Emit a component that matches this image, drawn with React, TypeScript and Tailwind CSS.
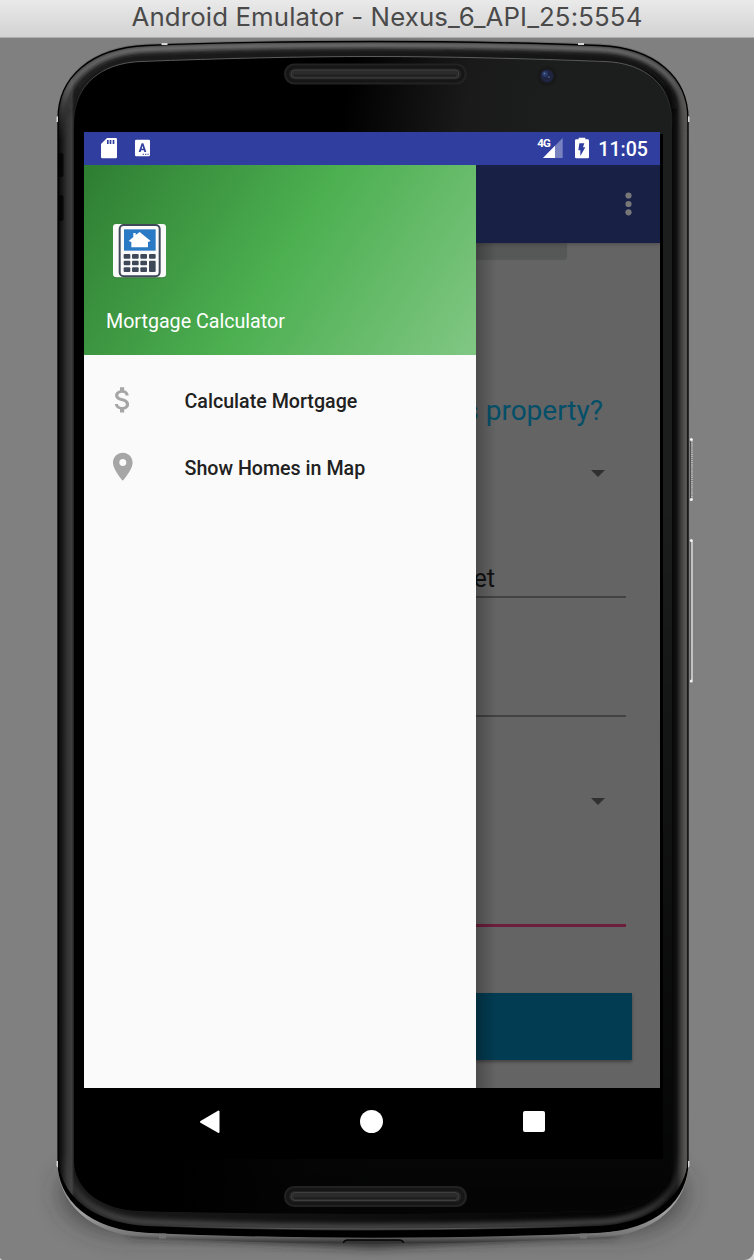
import type { ReactNode } from "react";
import { MdAttachMoney, MdPlace } from "react-icons/md";

const OUTER =
  "M58 119 C58 77 91 48 146 45.5 C220 42.5 300 41.5 373 41.5 C446 41.5 526 42.5 600 45.5 C655 48 688 77 688 119 L688 1160 C688 1201 655 1229 600 1232 C526 1235.500 446 1237 373 1237 C300 1237 220 1235.500 146 1232 C91 1229 58 1201 58 1160 Z";
const RIM =
  "M57 119 C57 76 90 46 146 43.5 C220 41 300 39.500 373 39.500 C446 39.500 526 41 600 43.5 C656 46 689 76 689 119 L689 1160 C689 1204 655 1235 600 1237.5 C526 1241.500 446 1243.500 373 1243.500 C300 1243.500 220 1241.500 146 1237.5 C91 1235 57 1204 57 1160 Z";
const GLASS =
  "M74 122 C74 85 101 63 141 61.5 C220 58.5 300 56.5 373 56.5 C446 56.5 526 58.5 605 61.5 C645 63 672 85 672 122 L672 1160 C672 1189 645 1210 605 1211 C526 1213 446 1214 373 1214 C300 1214 220 1213 141 1211 C101 1210 74 1189 74 1160 Z";

function Speaker({ y }: { y: number }) {
  return (
    <g>
      <rect x="284" y={y} width="183" height="21" rx="10" fill="#222222" />
      <rect x="287.500" y={y + 3.5} width="175.500" height="14" rx="7" fill="none" stroke="#161616" strokeWidth="3" />
      <rect x="291" y={y + 6.5} width="168" height="8" rx="4" fill="#2b2b2b" stroke="#3e3e3e" strokeWidth="1" />
      <rect x="294" y={y + 11} width="162" height="2" fill="#202020" />
    </g>
  );
}

function DeviceFrame() {
  return (
    <svg className="absolute inset-0" width="754" height="1222" viewBox="0 38 754 1222" aria-hidden="true">
      <defs>
        <linearGradient id="side" x1="58" x2="688" y1="0" y2="0" gradientUnits="userSpaceOnUse">
          <stop offset="0" stopColor="#060606" />
          <stop offset="0.006" stopColor="#161616" />
          <stop offset="0.015" stopColor="#343434" />
          <stop offset="0.022" stopColor="#3e3e3e" />
          <stop offset="0.0255" stopColor="#1a1a1a" />
          <stop offset="0.972" stopColor="#020202" />
          <stop offset="0.982" stopColor="#111111" />
          <stop offset="0.99" stopColor="#43413f" />
          <stop offset="0.996" stopColor="#5a5856" />
          <stop offset="1" stopColor="#4a4a4a" />
        </linearGradient>
        <linearGradient id="glass" x1="360" x2="560" y1="0" y2="30" gradientUnits="userSpaceOnUse">
          <stop offset="0" stopColor="#000" />
          <stop offset="0.6" stopColor="#1a1a1a" />
          <stop offset="1" stopColor="#1c1d1d" />
        </linearGradient>
        <linearGradient id="fade" x1="0" x2="0" y1="500" y2="1190" gradientUnits="userSpaceOnUse">
          <stop offset="0" stopColor="#000" stopOpacity="0" />
          <stop offset="1" stopColor="#000" stopOpacity="0.85" />
        </linearGradient>
        <linearGradient id="edge" x1="0" x2="0" y1="56" y2="130" gradientUnits="userSpaceOnUse">
          <stop offset="0" stopColor="#686868" />
          <stop offset="1" stopColor="#606060" stopOpacity="0" />
        </linearGradient>
        <linearGradient id="topLight" x1="0" x2="0" y1="46" y2="140" gradientUnits="userSpaceOnUse">
          <stop offset="0" stopColor="#787878" />
          <stop offset="0.4" stopColor="#666666" />
          <stop offset="1" stopColor="#444444" stopOpacity="0" />
        </linearGradient>
        <linearGradient id="topDark" x1="0" x2="0" y1="60" y2="120" gradientUnits="userSpaceOnUse">
          <stop offset="0" stopColor="#1c1c1c" />
          <stop offset="1" stopColor="#1c1c1c" stopOpacity="0" />
        </linearGradient>
        <linearGradient id="bottomLight" x1="0" x2="0" y1="1150" y2="1228" gradientUnits="userSpaceOnUse">
          <stop offset="0" stopColor="#4a4a4a" stopOpacity="0" />
          <stop offset="1" stopColor="#4c4c4c" />
        </linearGradient>
        <linearGradient id="seam" x1="146" x2="600" y1="0" y2="0" gradientUnits="userSpaceOnUse">
          <stop offset="0" stopColor="#5a5a5a" stopOpacity="0" />
          <stop offset="0.3" stopColor="#5a5a5a" />
          <stop offset="0.7" stopColor="#5a5a5a" />
          <stop offset="1" stopColor="#5a5a5a" stopOpacity="0" />
        </linearGradient>
        <linearGradient id="rim" x1="0" x2="0" y1="40" y2="1243" gradientUnits="userSpaceOnUse">
          <stop offset="0" stopColor="#6e6e6e" />
          <stop offset="0.05" stopColor="#777777" />
          <stop offset="0.94" stopColor="#8d8d8d" />
          <stop offset="0.975" stopColor="#a0a0a0" />
          <stop offset="0.993" stopColor="#777777" />
          <stop offset="1" stopColor="#333333" />
        </linearGradient>
        <filter id="soft" x="-20%" y="-20%" width="140%" height="140%">
          <feGaussianBlur stdDeviation="2.600" />
        </filter>
        <filter id="shadow" x="-30%" y="-80%" width="160%" height="260%">
          <feGaussianBlur stdDeviation="14" />
        </filter>
        <filter id="tight" x="-20%" y="-200%" width="140%" height="500%">
          <feGaussianBlur stdDeviation="5" />
        </filter>
        <clipPath id="body">
          <path d={OUTER} />
        </clipPath>
      </defs>
      <rect x="0" y="38" width="754" height="1222" fill="#808080" />
      <path d="M70 1175 H676 Q700 1215 630 1230 H116 Q46 1215 70 1175 Z" fill="#303030" opacity="0.85" filter="url(#shadow)" />
      <path d="M130 1230 L373 1243 L616 1230 Z" fill="#111" stroke="#222" strokeWidth="10" opacity="0.85" filter="url(#tight)" />
      <path d={RIM} fill="url(#rim)" />
      <path d={OUTER} fill="url(#side)" />
      <g clipPath="url(#body)">
        <path d="M61 150 L61 119 C61 80 94 52 146 49.5 C220 46.5 300 45.500 373 45.500 C446 45.500 526 46.5 600 49.500 C652 52 685 80 685 119 L685 150" fill="none" stroke="url(#topLight)" strokeWidth="7" filter="url(#soft)" />
        <path d="M69 150 L69 122 C69 82 100 60 144 57.5 C220 54.500 300 53 373 53 C446 53 526 54.500 602 57.5 C646 60 676 82 676 122 L676 150" fill="none" stroke="url(#topDark)" strokeWidth="6" filter="url(#soft)" />
        <path d="M66 1140 L66 1160 C66 1194 96 1219 146 1222 C220 1225.500 300 1227 373 1227 C446 1227 526 1225.500 600 1222 C650 1219 680 1194 680 1160 L680 1140" fill="none" stroke="url(#bottomLight)" strokeWidth="6" filter="url(#soft)" />
        <path d="M57 1155 C60 1198 94 1223 146 1226 C220 1229 300 1230.500 373 1230.500 C446 1230.500 526 1229 600 1226 C652 1223 686 1198 689 1155 V1245 H57 Z" fill="#000" />
        <path d="M146 1225 C220 1228 300 1229 373 1229 C446 1229 526 1228 600 1225" fill="none" stroke="url(#seam)" strokeWidth="1" />
      </g>
      <rect x="58.500" y="153" width="5" height="24" rx="2.500" fill="#000" opacity="0.7" />
      <rect x="58.500" y="195" width="5" height="26" rx="2.500" fill="#000" opacity="0.7" />
      <path d={OUTER} fill="none" stroke="#000" strokeWidth="1.3" />
      <path d={GLASS} fill="url(#glass)" />
      <path d={GLASS} fill="url(#fade)" />
      <path d={GLASS} fill="none" stroke="url(#edge)" strokeWidth="0.9" />
      <rect x="76" y="134" width="587" height="1025" fill="#000" />
      <Speaker y={63.5} />
      <Speaker y={1186} />
      <circle cx="547" cy="76" r="10" fill="#181919" />
      <circle cx="547" cy="76" r="6.500" fill="#1f2540" />
      <circle cx="545" cy="74" r="3" fill="#283b68" />
      <circle cx="544.500" cy="73.5" r="0.9" fill="#60729a" />
      <circle cx="549" cy="77" r="0.9" fill="#505a80" />
      <g fill="#d6d6d6">
        <path d="M161.500 43 h6 v2 h-6 Z M578 43 h6 v2 h-6 Z M56.500 117 l1.500 -1 v6 h-1.500 Z M688 116 l1.500 1 v5 h-1.500 Z M56.500 1161 h1.500 v7 l-1.500 -2 Z M688 1161 h1.500 v5 l-1.500 2 Z" />
      </g>
      <path d="M159 1233.500 h7 v5 h-7 Z M580 1233.500 h7 v5 h-7 Z" fill="#747474" />
      <path d="M343.500 1243 Q344 1240 348 1240 H399 Q403 1240 403.500 1243" fill="#333" stroke="#050505" strokeWidth="1.5" />
      <path d="M692 439 V500" stroke="#c4c4c4" strokeWidth="1.500" strokeDasharray="1.2 0.9" />
      <path d="M690.500 439 V500" stroke="#555" strokeWidth="1" />
      <path d="M690.500 540 V682" stroke="#696969" strokeWidth="1" />
      <path d="M692 541 V680" stroke="#efefef" strokeWidth="1.2" />
      <g fill="#f2f2f2">
        <circle cx="691.300" cy="439.500" r="1.500" />
        <circle cx="691.300" cy="499.500" r="1.500" />
        <circle cx="691.300" cy="540.500" r="1.500" />
        <circle cx="691.300" cy="681" r="1.500" />
      </g>
      <path d="M754 1250 Q753 1259 745 1260 H754 Z" fill="#d0d0d0" />
      <path d="M0 1258 L2 1260 H0 Z" fill="#d0d0d0" />
    </svg>
  );
}

function StatusBar() {
  return (
    <div className="flex h-[33px] items-start bg-[#303f9f] pl-[17px] pr-[12px] text-white">
      <svg className="mt-[5px]" width="16" height="22" viewBox="51 21 48 66">
        <path d="M69 24 H95 Q99 24 99 28 V81 Q99 85 95 85 H55 Q51 85 51 81 V42 Z" fill="#fff" />
        <path d="M69 30 h5 v12 h-5 Z M77 30 h5 v12 h-5 Z M86 30 h5 v12 h-5 Z" fill="#303f9f" />
      </svg>
      <svg className="ml-[18px] mt-[7px]" width="15" height="18" viewBox="153 27 45 54">
        <rect x="153" y="29" width="45" height="50" rx="4" fill="#fff" />
        <path d="M164 66 L173 40 H178 L187 66 H181 L179.500 61 H171.500 L170 66 Z M173 56 H178 L175.500 47 Z" fill="#303f9f" fillRule="evenodd" />
        <path d="M176 71 h4 v3 h-4 Z M183 71 h4 v3 h-4 Z M190 71 h4 v3 h-4 Z" fill="#303f9f" />
      </svg>
      <div className="ml-auto flex items-start">
        <span className="mr-[-7px] mt-[5px] font-['Roboto',sans-serif] text-[11.5px] font-bold leading-[13px] tracking-[-1px]">4G</span>
        <svg className="mt-[6px]" width="20" height="20" viewBox="250 23 60 60">
          <path d="M309 23 V83 H250 Z" fill="#fff" fillOpacity="0.35" />
          <path d="M286 46 V83 H250 Z" fill="#fff" />
        </svg>
        <svg className="ml-[12px] mt-[5px]" width="14" height="22" viewBox="345 20 42 66">
          <path d="M356 22 H376 V27 H383 Q387 27 387 31 V81 Q387 84 383 84 H349 Q345 84 345 81 V31 Q345 27 349 27 H356 Z" fill="#fff" />
          <path d="M358 39 H373 L369 51 H376 L361 77 V60 H355 Z" fill="#303f9f" />
        </svg>
        <span className="ml-[9.5px] mt-[6px] font-['Roboto',sans-serif] text-[19.6px] font-medium leading-6">11:05</span>
      </div>
    </div>
  );
}

function CalculatorLogo() {
  const keys = [
    [119, 371], [144, 371], [169, 371], [195, 371],
    [119, 391], [144, 391], [169, 391],
    [119, 411], [144, 411], [169, 411],
  ];
  return (
    <svg width="56" height="56" viewBox="84 278 168 168">
      <rect x="87" y="284" width="159" height="160" rx="10" fill="#000" opacity="0.2" />
      <rect x="87" y="281" width="159" height="160" rx="10" fill="#fafafa" />
      <rect x="107" y="284" width="120" height="154" rx="12" fill="#fafafa" stroke="#3f4859" strokeWidth="6" />
      <rect x="120" y="297" width="95" height="64" fill="#2979c4" />
      <path d="M134 332 L148 320 V308 H155 V314 L167 305 L200 332 L192 335 V351 H142 V335 Z" fill="#fff" />
      {keys.map(([x, y]) => (
        <rect key={`${x}-${y}`} x={x} y={y} width="20" height="14" rx="3" fill="#3f4859" />
      ))}
      <rect x="195" y="391" width="20" height="34" rx="3" fill="#3f4859" />
    </svg>
  );
}

function DrawerItem({ icon, children }: { icon: ReactNode; children: ReactNode }) {
  return (
    <li className="flex h-[67px] items-center pl-[22px]">
      <span className="flex w-[78.5px] text-[33.6px] text-[#a6a6a6]">{icon}</span>
      <span className="pt-[5px] text-[19.65px] font-medium text-[#212121]">{children}</span>
    </li>
  );
}

function Drawer() {
  return (
    <nav className="flex w-[391.5px] shrink-0 flex-col bg-[#fafafa]">
      <header className="flex h-[190px] flex-col bg-[linear-gradient(123deg,#2e7d32_0%,#4caf50_50%,#81c784_100%)] pl-[22px] pt-[58px] text-white">
        <div className="ml-[6px] h-14">
          <CalculatorLogo />
        </div>
        <p className="mt-[31px] text-[19.65px] leading-6">Mortgage Calculator</p>
      </header>
      <ul className="pt-[11px]">
        <DrawerItem icon={<MdAttachMoney />}>Calculate Mortgage</DrawerItem>
        <DrawerItem icon={<MdPlace />}>Show Homes in Map</DrawerItem>
      </ul>
    </nav>
  );
}

function Caret() {
  return (
    <svg className="mr-[55px] self-end" width="14" height="7" viewBox="0 0 14 7">
      <path d="M0 0 H14 L7 7 Z" fill="#303030" />
    </svg>
  );
}

function FormBehind() {
  return (
    <main className="relative flex min-w-0 flex-1 flex-col overflow-hidden bg-[#646464]">
      <div className="relative z-10 flex h-[78px] shrink-0 items-center justify-end bg-[#192045] pr-[28px] shadow-[0_1px_4px_rgba(0,0,0,0.25)]">
        <svg width="7" height="24" viewBox="0 0 7 24" fill="#777777">
          <circle cx="3.500" cy="3.500" r="3.100" />
          <circle cx="3.500" cy="12" r="3.100" />
          <circle cx="3.500" cy="20.300" r="3.100" />
        </svg>
      </div>
      <div className="h-4 w-[91px] shrink-0 rounded-br-[3px] bg-[#565757] shadow-[0_1px_1px_rgba(0,0,0,0.12)]" />
      <p className="mr-[57px] mt-[136px] self-end whitespace-nowrap text-[28px] leading-8 text-[#034e68]">s property?</p>
      <div className="mt-[43px] flex flex-col">
        <Caret />
      </div>
      <p className="ml-[-2px] mt-[87px] text-[25.2px] leading-[30px] text-[#111111]">et</p>
      <div className="mr-[34px] mt-[2px] h-[2px] shrink-0 bg-[#424242]" />
      <div className="mr-[34px] mt-[117px] h-[2px] shrink-0 bg-[#424242]" />
      <div className="mt-[81px] flex flex-col">
        <Caret />
      </div>
      <div className="mr-[34px] mt-[119px] h-[3px] shrink-0 bg-[#6c1e3c]" />
      <div className="mr-[28.5px] mt-[66px] h-[67px] shrink-0 bg-[#023c52] shadow-[0_2px_3px_rgba(0,0,0,0.35)]" />
      <div className="absolute inset-y-0 left-0 w-5 bg-linear-to-r from-black/25 to-transparent" />
    </main>
  );
}

function NavigationBar() {
  return (
    <div className="flex h-[70px] items-center bg-black pb-[3px] pl-[115px] pr-[114px]">
      <svg width="22" height="24" viewBox="0 0 22 24">
        <path d="M19.500 1.500 V22 L2 11.800 Z" fill="#fff" stroke="#fff" strokeWidth="2" strokeLinejoin="round" />
      </svg>
      <span className="ml-[139px] size-[23px] rounded-full bg-white" />
      <span className="ml-auto mr-[1.5px] size-[21.5px] rounded-[2px] bg-white" />
    </div>
  );
}

export default function App() {
  return (
    <div className="flex h-[1260px] w-[754px] flex-col overflow-hidden bg-[#808080] font-['Roboto',sans-serif]">
      <header className="flex h-[38px] shrink-0 justify-center border-b border-[#adadad] bg-linear-to-b from-[#eaeaea] to-[#d2d2d2] pl-5">
        <h1 className="whitespace-nowrap font-['Inter',sans-serif] text-[25.8px] leading-[34px] tracking-[0.12px] text-[#4a4a4a]">
          Android Emulator - Nexus_6_API_25:5554
        </h1>
      </header>
      <div className="relative flex-1 pl-[84px] pt-[94px]">
        <DeviceFrame />
        <div className="relative flex h-[1026px] w-[576px] flex-col">
          <StatusBar />
          <div className="flex min-h-0 flex-1">
            <Drawer />
            <FormBehind />
          </div>
          <NavigationBar />
        </div>
      </div>
    </div>
  );
}
